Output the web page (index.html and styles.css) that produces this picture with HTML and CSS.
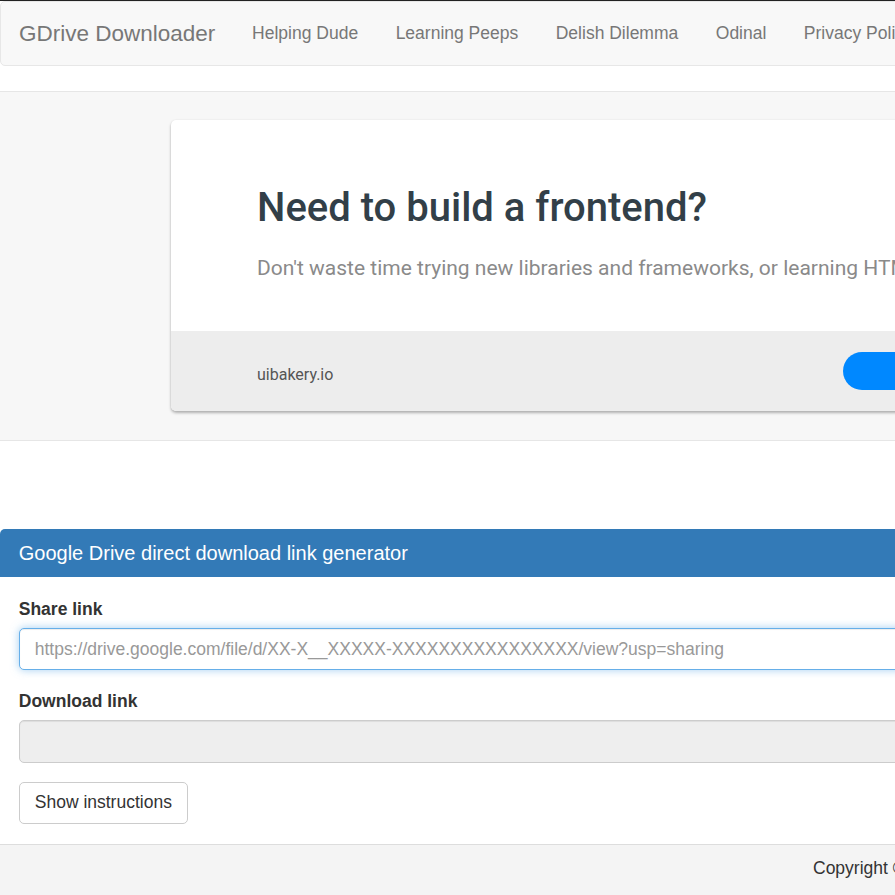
FILE: index.html
```html
<!DOCTYPE html>
<html lang="en">
<head>
<meta charset="utf-8">
<title>GDrive Downloader</title>
<link rel="stylesheet" href="styles.css">
</head>
<body>
<div class="page">
  <nav class="navbar">
    <a class="brand" href="#">GDrive Downloader</a>
    <ul class="nav-links">
      <li><a href="#">Helping Dude</a></li>
      <li><a href="#">Learning Peeps</a></li>
      <li><a href="#">Delish Dilemma</a></li>
      <li><a href="#">Odinal</a></li>
      <li><a href="#">Privacy Policy</a></li>
    </ul>
  </nav>

  <section class="ad-band">
    <div class="ad-card">
      <div class="ad-body">
        <h2 class="ad-title">Need to build a frontend?</h2>
        <p class="ad-text">Don't waste time trying new libraries and frameworks, or learning HTML and CSS.</p>
      </div>
      <div class="ad-footer">
        <span class="ad-site">uibakery.io</span>
        <a class="ad-btn" href="#">Try UI Bakery</a>
      </div>
    </div>
  </section>

  <div class="panel">
    <div class="panel-heading">
      <h3 class="panel-title">Google Drive direct download link generator</h3>
    </div>
    <div class="panel-body">
      <div class="form-group">
        <label class="label" for="share">Share link</label>
        <input id="share" class="form-control focus" type="text" placeholder="https://drive.google.com/file/d/XX-X__XXXXX-XXXXXXXXXXXXXXXX/view?usp=sharing">
      </div>
      <div class="form-group">
        <label class="label" for="dl">Download link</label>
        <input id="dl" class="form-control readonly" type="text" readonly>
      </div>
      <button class="btn" type="button">Show instructions</button>
    </div>
    <footer class="panel-footer">
      <span>Copyright © 2024 GDrive Downloader</span>
    </footer>
  </div>
</div>
</body>
</html>
```

FILE: styles.css
```css
html, body {
  margin: 0;
  padding: 0;
  overflow: hidden;
  background: #fff;
}

body {
  border-top: 1px solid #222;
  font-family: "Liberation Sans", Arial, sans-serif;
  font-size: 17.5px;
  line-height: 25px;
  color: #333;
}

.page {
  width: 1900px;
}

a { text-decoration: none; }

/* Navbar */
.navbar {
  display: flex;
  align-items: center;
  height: 62.5px;
  background: #f8f8f8;
  border: 1px solid #e7e7e7;
  border-radius: 5px;
  margin-bottom: 25px;
}

.brand {
  padding: 0 18px;
  font-size: 22.5px;
  line-height: 25px;
  color: #777;
}

.nav-links {
  display: flex;
  list-style: none;
  margin: 0;
  padding: 0;
}

.nav-links a {
  display: block;
  padding: 0 18.75px;
  font-size: 17.5px;
  color: #777;
}

/* Ad band */
.ad-band {
  background: #f7f7f7;
  border-top: 1px solid #e6e6e6;
  border-bottom: 1px solid #e6e6e6;
  padding: 28px 0 29px 171px;
  margin-bottom: 88px;
}

.ad-card {
  width: 1000px;
  background: #fff;
  border-radius: 5px;
  box-shadow: 0 2px 3px rgba(0, 0, 0, 0.28), 0 0 2px rgba(0, 0, 0, 0.08);
  overflow: hidden;
  font-family: Roboto, "Liberation Sans", sans-serif;
}

.ad-body {
  padding: 62px 86px 49px;
}

.ad-title {
  margin: 0;
  font-size: 40px;
  line-height: 52px;
  font-weight: 500;
  color: #323f48;
}

.ad-text {
  margin: 20px 0 0;
  font-size: 21px;
  line-height: 28px;
  color: #8a8a8a;
  white-space: nowrap;
}

.ad-footer {
  display: flex;
  align-items: center;
  height: 80px;
  background: #ededed;
  padding: 0 86px;
}

.ad-site {
  width: 586px;
  font-size: 16px;
  color: #555;
  padding-top: 8px;
}

.ad-btn {
  display: block;
  width: 240px;
  height: 38px;
  line-height: 38px;
  border-radius: 19px;
  background: #0088ff;
  color: #fff;
  text-align: center;
  font-size: 16px;
  font-weight: 500;
}

/* Panel */
.panel {
  border-radius: 5px 5px 0 0;
}

.panel-heading {
  background: #337ab7;
  border-radius: 5px 5px 0 0;
  padding: 13px 18.75px;
}

.panel-title {
  margin: 0;
  font-size: 20px;
  line-height: 22px;
  font-weight: 400;
  color: #fff;
}

.panel-body {
  padding: 20px 18.75px 20px;
}

.form-group {
  margin-bottom: 18.75px;
}

.label {
  display: block;
  font-weight: 700;
  margin-bottom: 6.25px;
}

.form-control {
  display: block;
  box-sizing: border-box;
  width: 1200px;
  height: 42.5px;
  padding: 7.5px 15px;
  font-family: "Liberation Sans", Arial, sans-serif;
  font-size: 17.5px;
  color: #555;
  background: #fff;
  border: 1px solid #ccc;
  border-radius: 5px;
  box-shadow: inset 0 1px 1px rgba(0, 0, 0, 0.075);
  outline: none;
}

.form-control::placeholder {
  color: #999;
}

.form-control.focus {
  border-color: #66afe9;
  box-shadow: inset 0 1px 1px rgba(0, 0, 0, 0.075), 0 0 8px rgba(102, 175, 233, 0.6);
}

.form-control.readonly {
  background: #eee;
}

.btn {
  display: inline-block;
  height: 42.5px;
  padding: 7.5px 15px;
  font-family: "Liberation Sans", Arial, sans-serif;
  font-size: 17.5px;
  line-height: 25px;
  color: #333;
  background: #fff;
  border: 1px solid #ccc;
  border-radius: 5px;
  cursor: pointer;
}

.panel-footer {
  background: #f4f4f4;
  border-top: 1px solid #ddd;
  padding: 11px 0 40px 813px;
  color: #333;
}
```
